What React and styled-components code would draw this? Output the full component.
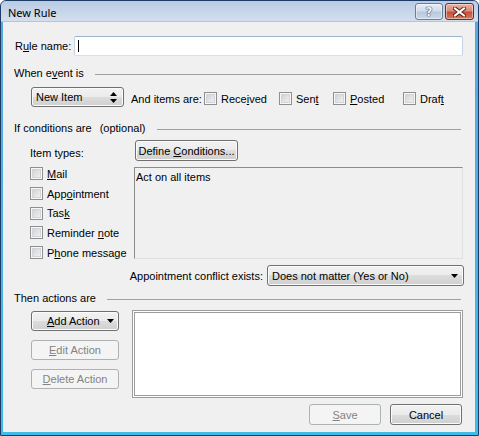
import React from 'react';
import styled, { createGlobalStyle } from 'styled-components';

const GlobalStyle = createGlobalStyle`
  html, body { margin: 0; padding: 0; background: #ffffff; }
  body { font-family: "Liberation Sans", Arial, sans-serif; font-size: 11px; color: #000; }
  * { box-sizing: border-box; }
`;

const Window = styled.div`
  width: 479px;
  height: 436px;
  display: flex;
  flex-direction: column;
  border: 1px solid #1d3d66;
  border-radius: 6px 6px 0 0;
  padding: 0 3px 3px 2px;
  background: linear-gradient(to bottom, #5aa6dc, #3fbbe8);
  overflow: hidden;
`;

const TitleBar = styled.div`
  height: 21px;
  margin: 0 -3px 0 -2px;
  display: flex;
  align-items: flex-start;
  padding: 2px 4px 0 7px;
  background: linear-gradient(to bottom, #bacbe3, #d3dfef);
  border-bottom: 1px solid #b4c4da;
`;

const Title = styled.span`
  flex: 1;
  font-family: "Noto Sans", "Open Sans", sans-serif;
  font-size: 11px;
  line-height: 19px;
  color: #000;
`;

const CaptionButton = styled.div`
  width: ${p => p.$w}px;
  height: 17px;
  margin-left: ${p => p.$ml || 0}px;
  border: 1px solid ${p => (p.$close ? '#6b2b1f' : '#6e7d92')};
  border-radius: 3px;
  display: flex;
  align-items: center;
  justify-content: center;
  background: ${p =>
    p.$close
      ? 'linear-gradient(to bottom, #eab0a2 0%, #db8c79 45%, #c5523a 55%, #d77a5c 100%)'
      : 'linear-gradient(to bottom, #e6edf5 0%, #d2dcea 45%, #b9c8dc 55%, #ccd8e8 100%)'};
  box-shadow: inset 0 0 0 1px rgba(255, 255, 255, 0.45);
`;

const HelpGlyph = styled.span`
  font-family: "DejaVu Sans", sans-serif;
  font-weight: bold;
  font-size: 12px;
  line-height: 12px;
  color: #f4f6f9;
  text-shadow: 0 0 1px #3a4a60, 0 0 1px #3a4a60, 0 0 1px #3a4a60;
`;

const Client = styled.div`
  flex: 1;
  background: #f0f0f0;
  padding: 14px 12px 0 12px;
  display: flex;
  flex-direction: column;
`;

const RuleRow = styled.div`
  display: grid;
  grid-template-columns: 59px 1fr;
  align-items: center;
  height: 20px;
`;

const TextInput = styled.div`
  height: 20px;
  background: #fff;
  border: 1px solid;
  border-color: #9fb2cc #c6d3e3 #d6e0ec #c6d3e3;
  border-radius: 2px;
  padding: 3px 3px;
  display: flex;
  align-items: center;
`;

const Caret = styled.span`
  width: 1px;
  height: 12px;
  background: #000;
`;

const SectionHeader = styled.div`
  display: flex;
  align-items: center;
  height: 14px;
  margin-top: ${p => p.$mt}px;
  margin-left: -1px;
  padding-right: 2px;
  white-space: nowrap;
  &::after {
    content: '';
    flex: 1;
    height: 1px;
    margin-top: 2px;
    margin-left: 11px;
    background: #a0a0a0;
  }
`;

const Optional = styled.span`
  margin-left: 8px;
`;

const EventRow = styled.div`
  display: flex;
  align-items: center;
  height: 20px;
  margin: 7px 0 0 16px;
`;

const Combo = styled.div`
  width: ${p => p.$w}px;
  height: ${p => p.$h}px;
  display: flex;
  align-items: center;
  justify-content: space-between;
  padding: 0 ${p => p.$pr}px 0 4px;
  border: 1px solid #707070;
  border-radius: 3px;
  background: linear-gradient(to bottom, #f2f2f2 0%, #ebebeb 50%, #dddddd 50%, #cfcfcf 100%);
  box-shadow: inset 0 0 0 1px #fbfbfb;
  white-space: nowrap;
`;

const ItemsGroup = styled.div`
  display: flex;
  align-items: center;
  margin-left: 7px;
  padding-top: 3px;
`;

const ItemsLabel = styled.span`
  width: 73px;
  white-space: nowrap;
`;

const CheckItem = styled.label`
  display: flex;
  align-items: center;
  gap: 4px;
  width: ${p => (p.$w ? `${p.$w}px` : 'auto')};
  height: ${p => (p.$h ? `${p.$h}px` : 'auto')};
  white-space: nowrap;
`;

const Box = styled.span`
  width: 13px;
  height: 13px;
  flex: none;
  border: 1px solid #8e8f8f;
  background: linear-gradient(135deg, #c9ccd0 0%, #e2e4e6 55%, #f6f6f6 100%);
  box-shadow: inset 0 0 0 1px #f7f7f7, inset 0 0 0 2px #d2d4d7;
`;

const CondArea = styled.div`
  display: grid;
  grid-template-columns: 104px 1fr;
  grid-template-rows: 119px;
  margin: 5px 0 0 15px;
`;

const LeftCol = styled.div`
  display: flex;
  flex-direction: column;
  padding-top: 6px;
`;

const TypesLabel = styled.div`
  height: 14px;
  line-height: 14px;
`;

const CheckList = styled.div`
  display: flex;
  flex-direction: column;
  margin-top: 4px;
`;

const RightCol = styled.div`
  display: flex;
  flex-direction: column;
  gap: 6px;
`;

const Button = styled.button`
  width: ${p => p.$w}px;
  height: ${p => p.$h || 21}px;
  margin-left: ${p => p.$ml || 0}px;
  font-family: "Liberation Sans", Arial, sans-serif;
  font-size: 11px;
  color: #000;
  display: flex;
  align-items: center;
  justify-content: ${p => (p.$start ? 'flex-start' : 'center')};
  padding: 0 0 0 ${p => p.$pl || 0}px;
  border: 1px solid #707070;
  border-radius: 3px;
  background: linear-gradient(to bottom, #f2f2f2 0%, #ebebeb 50%, #dddddd 50%, #cfcfcf 100%);
  box-shadow: inset 0 0 0 1px #fbfbfb;
  white-space: nowrap;
  &:disabled {
    color: #838383;
    border-color: #adb2b5;
    background: #f4f4f4;
    box-shadow: none;
  }
`;

const InfoBox = styled.div`
  height: 92px;
  background: #f0f0f0;
  border: 1px solid;
  border-color: #8c8c8c #e0e0e0 #e0e0e0 #8c8c8c;
  padding: 3px 1px;
  line-height: 13px;
`;

const ConflictRow = styled.div`
  display: flex;
  align-items: center;
  justify-content: flex-end;
  margin: 6px -1px 0 0;
  gap: 4px;
`;

const ActionsArea = styled.div`
  display: grid;
  grid-template-columns: 88px 1fr;
  column-gap: 13px;
  margin: 5px 0 0 16px;
`;

const ActionButtons = styled.div`
  display: flex;
  flex-direction: column;
  gap: 9px;
  padding-top: 1px;
`;

const ActionsList = styled.div`
  height: 88px;
  background: #fff;
  border: 3px double #9c9c9c;
`;

const Footer = styled.div`
  display: flex;
  justify-content: flex-end;
  gap: 9px;
  margin: 6px 1px 0 0;
`;

const Arrow = styled.svg`
  flex: none;
  margin-left: ${p => p.$ml || 0}px;
`;

const DownArrow = ({ ml }) => (
  <Arrow $ml={ml} width="7" height="4" viewBox="0 0 7 4">
    <path d="M0 0 H7 L3.5 4 Z" fill="#000" />
  </Arrow>
);

const UpDownArrow = () => (
  <Arrow width="7" height="11" viewBox="0 0 7 11">
    <path d="M3.5 0 L7 4 H0 Z M0 7 H7 L3.5 11 Z" fill="#000" />
  </Arrow>
);

const Check = ({ children, w, h }) => (
  <CheckItem $w={w} $h={h}>
    <Box />
    <span>{children}</span>
  </CheckItem>
);

export default function App() {
  return (
    <>
      <GlobalStyle />
      <Window>
        <TitleBar>
          <Title>New Rule</Title>
          <CaptionButton $w={28}>
            <HelpGlyph>?</HelpGlyph>
          </CaptionButton>
          <CaptionButton $w={29} $ml={2} $close>
            <svg width="13" height="10" viewBox="0 0 13 10">
              <path d="M2 1.5 L11 8.5 M11 1.5 L2 8.5" stroke="#5b2216" strokeWidth="4" strokeLinecap="square" />
              <path d="M2 1.5 L11 8.5 M11 1.5 L2 8.5" stroke="#ffffff" strokeWidth="2" strokeLinecap="square" />
            </svg>
          </CaptionButton>
        </TitleBar>
        <Client>
          <RuleRow>
            <span>R<u>u</u>le name:</span>
            <TextInput>
              <Caret />
            </TextInput>
          </RuleRow>

          <SectionHeader $mt={10}>
            <span>When e<u>v</u>ent is</span>
          </SectionHeader>

          <EventRow>
            <Combo $w={93} $h={20} $pr={6}>
              <span>New Item</span>
              <UpDownArrow />
            </Combo>
            <ItemsGroup>
              <ItemsLabel>And items are:</ItemsLabel>
              <Check w={75}>Rece<u>i</u>ved</Check>
              <Check w={54}>Sen<u>t</u></Check>
              <Check w={70}><u>P</u>osted</Check>
              <Check>Draf<u>t</u></Check>
            </ItemsGroup>
          </EventRow>

          <SectionHeader $mt={14}>
            <span>If conditions are<Optional>(optional)</Optional></span>
          </SectionHeader>

          <CondArea>
            <LeftCol>
              <TypesLabel>Item types:</TypesLabel>
              <CheckList>
                <Check h={19.7}><u>M</u>ail</Check>
                <Check h={19.7}>App<u>o</u>intment</Check>
                <Check h={19.7}>Tas<u>k</u></Check>
                <Check h={19.7}>Reminder <u>n</u>ote</Check>
                <Check h={19.7}>P<u>h</u>one message</Check>
              </CheckList>
            </LeftCol>
            <RightCol>
              <Button $w={103} $ml={1}><span>Define <u>C</u>onditions...</span></Button>
              <InfoBox>Act on all items</InfoBox>
            </RightCol>
          </CondArea>

          <ConflictRow>
            <span>Appointment conflict exists:</span>
            <Combo $w={197} $h={21} $pr={5}>
              <span>Does not matter (Yes or No)</span>
              <DownArrow />
            </Combo>
          </ConflictRow>

          <SectionHeader $mt={5}>
            <span>Then actions are</span>
          </SectionHeader>

          <ActionsArea>
            <ActionButtons>
              <Button $w={88} $h={20} $start $pl={15}>
                <span><u>A</u>dd Action</span>
                <DownArrow ml={7} />
              </Button>
              <Button $w={88} $h={20} disabled><span><u>E</u>dit Action</span></Button>
              <Button $w={88} $h={20} disabled><span><u>D</u>elete Action</span></Button>
            </ActionButtons>
            <ActionsList />
          </ActionsArea>

          <Footer>
            <Button $w={72} $h={21} disabled><span><u>S</u>ave</span></Button>
            <Button $w={72} $h={21}><span>Cancel</span></Button>
          </Footer>
        </Client>
      </Window>
    </>
  );
}
